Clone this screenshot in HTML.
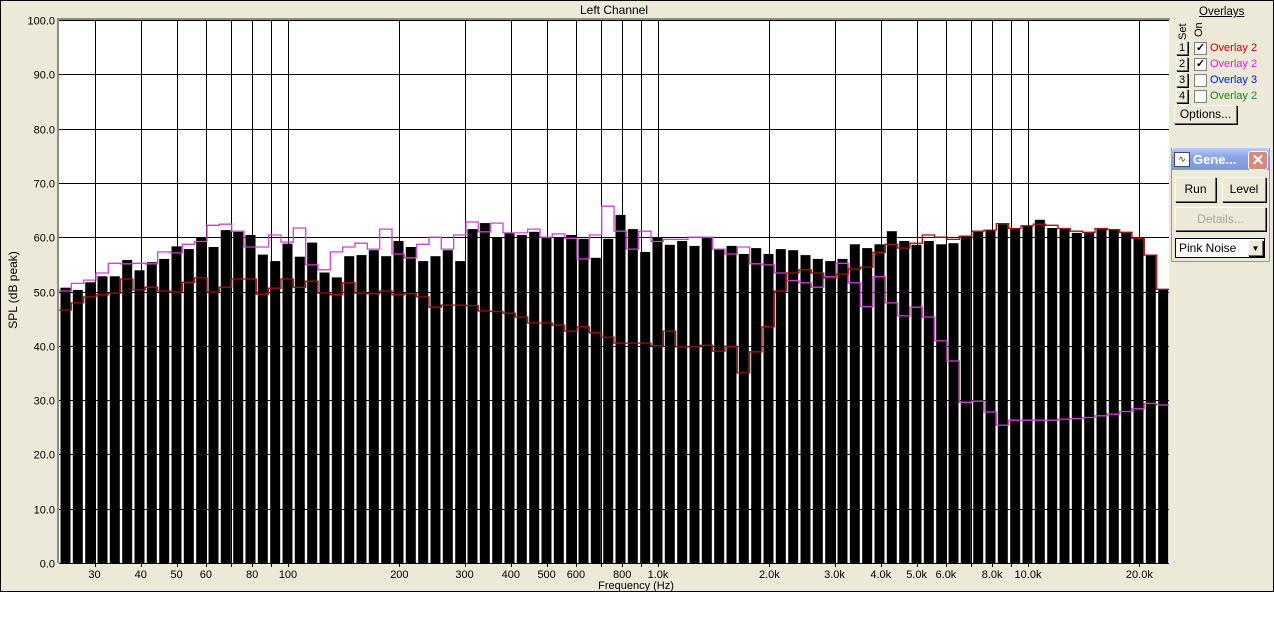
<!DOCTYPE html>
<html><head><meta charset="utf-8">
<style>
body{margin:0;width:1274px;height:637px;background:#fff;overflow:hidden;font-family:"Liberation Sans",Arial,sans-serif;}
#frame{position:absolute;left:0;top:0;width:1272px;height:590px;border:1px solid #000;background:#ECE9D8;}
svg{position:absolute;left:0;top:0}
.btn{position:absolute;background:#ECE9D8;border:1px solid;border-color:#fff #716F64 #716F64 #fff;box-shadow:1px 1px 0 #000;font-size:12px;text-align:center;box-sizing:border-box;}
.lbl{position:absolute;font-size:11px;}
</style></head><body>
<div id="frame"></div>
<svg id="s" width="1274" height="637" xmlns="http://www.w3.org/2000/svg" font-family="Liberation Sans, Arial, sans-serif" font-size="11"></svg>

<!-- right panel -->
<div class="lbl" style="left:1199px;top:6px;font-size:11.5px;text-decoration:underline;">Overlays</div>
<div class="lbl" style="left:1177px;top:22px;transform:rotate(-90deg);transform-origin:left top;top:40px;">Set</div>
<div class="lbl" style="left:1193px;top:37px;transform:rotate(-90deg);transform-origin:left top;">On</div>
<div class="btn" style="left:1176px;top:41px;width:12px;height:14px;font-size:11px;line-height:12px;">1</div>
<div class="btn" style="left:1176px;top:57px;width:12px;height:14px;font-size:11px;line-height:12px;">2</div>
<div class="btn" style="left:1176px;top:73px;width:12px;height:14px;font-size:11px;line-height:12px;">3</div>
<div class="btn" style="left:1176px;top:89px;width:12px;height:14px;font-size:11px;line-height:12px;">4</div>
<div style="position:absolute;left:1194px;top:42px;width:11px;height:11px;background:#fff;border:1px solid #808080;font-size:11px;line-height:11px;text-align:center;font-weight:bold;">✓</div>
<div style="position:absolute;left:1194px;top:58px;width:11px;height:11px;background:#fff;border:1px solid #808080;font-size:11px;line-height:11px;text-align:center;font-weight:bold;">✓</div>
<div style="position:absolute;left:1194px;top:74px;width:11px;height:11px;background:#fff;border:1px solid #808080;"></div>
<div style="position:absolute;left:1194px;top:90px;width:11px;height:11px;background:#fff;border:1px solid #808080;"></div>
<div class="lbl" style="left:1210px;top:42px;color:#c00000;">Overlay 2</div>
<div class="lbl" style="left:1210px;top:58px;color:#e020e0;">Overlay 2</div>
<div class="lbl" style="left:1210px;top:74px;color:#0020c0;">Overlay 3</div>
<div class="lbl" style="left:1210px;top:90px;color:#208020;">Overlay 2</div>
<div class="btn" style="left:1174px;top:105px;width:63px;height:19px;line-height:17px;">Options...</div>

<div style="position:absolute;left:1171px;top:148px;width:99px;height:114px;background:#ECE9D8;border:1px solid #7A96DF;border-top:none;box-sizing:border-box;"></div>
<div style="position:absolute;left:1171px;top:148px;width:99px;height:22px;background:linear-gradient(#B8CCF5,#8AA6E8 40%,#7C98E0);border-radius:5px 5px 0 0;"></div>
<div style="position:absolute;left:1174px;top:152px;width:14px;height:13px;background:#fff;border:1px solid #446;font-size:9px;line-height:12px;text-align:center;color:#224;">∿</div>
<div class="lbl" style="left:1193px;top:152px;color:#fff;font-weight:bold;font-size:13px;">Gene...</div>
<div style="position:absolute;left:1248px;top:151px;width:18px;height:17px;background:#D7897B;border:1px solid #fff;border-radius:3px;color:#fff;font-size:15px;line-height:17px;text-align:center;font-weight:bold;">✕</div>
<div class="btn" style="left:1175px;top:177px;width:41px;height:25px;line-height:23px;">Run</div>
<div class="btn" style="left:1222px;top:177px;width:44px;height:25px;line-height:23px;">Level</div>
<div class="btn" style="left:1175px;top:207px;width:91px;height:24px;line-height:22px;color:#aca899;">Details...</div>
<div style="position:absolute;left:1175px;top:238px;width:90px;height:20px;background:#fff;border:1px solid #000;box-sizing:border-box;font-size:12px;line-height:18px;padding-left:3px;">Pink Noise</div>
<div class="btn" style="left:1248px;top:240px;width:15px;height:16px;font-size:8px;line-height:15px;">▼</div>

<script>
var s=document.getElementById('s');var h='';
var L=59,R=1169,T=20,B=563;
function X(f){return 288+370*Math.log10(f/100);}
function Y(d){return B-(B-T)*d/100;}
h+='<rect x="'+L+'" y="'+T+'" width="'+(R-L)+'" height="'+(B-T)+'" fill="#fff"/>';
h+='<rect x="57" y="18" width="'+(R-57+1)+'" height="2" fill="#8c8c8c"/>';
h+='<rect x="57" y="18" width="2" height="'+(B-18)+'" fill="#8c8c8c"/>';
for(var d=0;d<=100;d+=10){var y=Math.round(Y(d))+0.5;h+='<line x1="'+L+'" x2="'+R+'" y1="'+y+'" y2="'+y+'" stroke="#000"/>';
h+='<text x="55" y="'+(y+4)+'" text-anchor="end">'+d.toFixed(1)+'</text>';}
var fs=[30,40,50,60,70,80,90,100,200,300,400,500,600,700,800,900,1000,2000,3000,4000,5000,6000,7000,8000,9000,10000,20000];
fs.forEach(function(f){var x=Math.round(X(f))+0.5;h+='<line x1="'+x+'" x2="'+x+'" y1="'+T+'" y2="'+B+'" stroke="#000"/><line x1="'+x+'" x2="'+x+'" y1="'+B+'" y2="'+(B+4)+'" stroke="#000"/>';});
var lb={30:'30',40:'40',50:'50',60:'60',80:'80',100:'100',200:'200',300:'300',400:'400',500:'500',600:'600',800:'800',1000:'1.0k',2000:'2.0k',3000:'3.0k',4000:'4.0k',5000:'5.0k',6000:'6.0k',8000:'8.0k',10000:'10.0k',20000:'20.0k'};
for(var k in lb){h+='<text x="'+X(+k)+'" y="578" text-anchor="middle">'+lb[k]+'</text>';}
var bars=[50.7,50.3,51.7,52.8,52.8,55.8,53.9,55.4,56.0,58.3,57.8,60.0,58.2,61.3,61.0,60.4,56.8,55.6,58.8,56.4,59.0,53.5,52.6,
56.5,56.7,57.6,56.5,59.3,58.2,55.6,56.5,57.6,55.6,61.5,62.6,60.0,60.8,60.4,61.0,60,60,60.4,59.7,56.2,59.7,64.1,
61.5,57.3,60,58.6,59.3,58.4,60,57.8,58.4,56.9,58,56.9,57.8,57.6,56.7,56,55.6,56,58.7,58,58.7,61.1,59.3,
58.6,59.3,58.7,58.9,60.2,61,61.3,62.4,61.5,62.1,63.2,61.7,61.5,60.8,60.8,61.5,61.3,60.8,59.7,56.7,50.3];
var red=[46.6,47.9,49,49.4,49.7,52.3,50.3,50.8,50.1,49.9,51.7,52.5,49.9,50.8,52.3,52.3,49.5,50.6,52.3,50.8,51.9,49.7,49.4,
51.6,49.7,49.6,50.1,49.4,49.6,49,47.1,47.5,47.5,47.4,46.4,46.3,46,45.3,44.2,44.2,43.8,42.7,43.5,42.4,41.6,40.5,
40.5,40.5,40,42.7,39.8,39.8,40.1,39,39.9,35,38.9,43.5,50.1,53.4,54,53.4,52.5,53.2,54.1,54.5,57.2,58.7,58,
58.9,60.4,60,59.6,60.2,61.1,61.3,62.5,61.6,62.1,62.4,62.2,61.6,61.1,60.9,61.6,61.4,60.9,59.8,56.7,50.4];
var mag=[50.1,51.5,52.1,53.4,55.2,55.1,55.2,55.1,57.3,57.1,58.7,59.2,62.2,62.4,61.1,58.2,58.2,60.4,59.1,61.7,54.9,54,57.3,
58.2,58.9,57.8,61.5,56.9,56.2,58.7,60,57.8,60.4,62.8,61,62.6,60.8,60.8,61.5,60,60.6,59.8,56,60.4,65.7,61.1,
57.8,61.1,59.2,59.6,59.6,60,60,57.8,56.9,58.2,55.1,54.9,53.4,52,51.6,50.8,52.7,55.2,51.6,47.2,52.7,47.9,45.5,
47.1,45.3,40.9,37.2,29.6,29.8,27.8,25.4,26.3,26.3,26.3,26.3,26.5,26.6,26.8,27.1,27.4,27.9,28.4,29.4,29.1];
var p=(R-L)/90;
for(var i=0;i<90;i++){var x0=L+i*p+1.5,w=p-2.3;var y=Y(bars[i]);h+='<rect x="'+x0.toFixed(1)+'" y="'+y.toFixed(1)+'" width="'+w.toFixed(1)+'" height="'+(B-y).toFixed(1)+'" fill="#000"/>';}
function step(a,c){var d='';for(var i=0;i<90;i++){var y=Y(a[i]).toFixed(1);var x0=(L+i*p).toFixed(1),x1=(L+(i+1)*p).toFixed(1);d+=(i?'L':'M')+x0+' '+y+'L'+x1+' '+y;}
h+='<path d="'+d+'" fill="none" stroke="'+c+'" stroke-width="1.3"/>';}
step(mag,'#d040d0');step(red,'#a01010');
h+='<text x="614" y="14" text-anchor="middle" font-size="12">Left Channel</text>';
h+='<text x="636" y="589" text-anchor="middle" font-size="11">Frequency (Hz)</text>';
h+='<text transform="translate(17,290) rotate(-90)" text-anchor="middle" font-size="12">SPL (dB peak)</text>';
s.innerHTML=h;
</script>
</body></html>
